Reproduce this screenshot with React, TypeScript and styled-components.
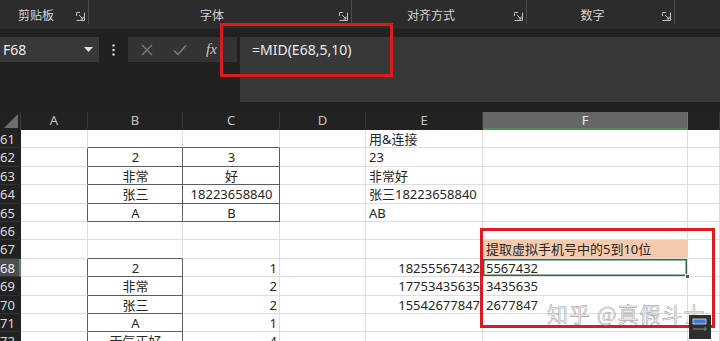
import React from "react";
import styled, { createGlobalStyle } from "styled-components";

const Global = createGlobalStyle`
  html, body { margin: 0; padding: 0; background: #212121; }
  * { box-sizing: border-box; }
`;

const Screen = styled.div`
  position: relative;
  width: 720px;
  height: 341px;
  overflow: hidden;
  background: #212121;
  font-family: "Noto Sans", "Noto Sans CJK SC", sans-serif;
`;

const Ribbon = styled.div`
  display: flex;
  height: 29px;
  background: #2c2c2c;
  border-bottom: 1px solid #262626;
`;

const Group = styled.div<{ $w: number; $pad?: number }>`
  display: flex;
  align-items: flex-end;
  width: ${(p) => p.$w}px;
  height: 24px;
  padding-left: ${(p) => p.$pad ?? 0}px;
  border-right: 1px solid #4a4a4a;
`;

const GroupLabel = styled.div`
  flex: 1;
  text-align: center;
  font-family: "Noto Sans CJK SC", sans-serif;
  font-size: 12px;
  line-height: 14px;
  padding-bottom: 2px;
  color: #d4d4d4;
`;

const Launcher = styled.div`
  width: 16px;
  height: 14px;
  display: flex;
  align-items: center;
  justify-content: center;
  padding-bottom: 2px;
`;

const FormulaRow = styled.div`
  display: flex;
  align-items: flex-start;
  margin-top: 8px;
  height: 65px;
`;

const NameBox = styled.div`
  width: 99px;
  height: 25px;
  background: #383838;
  display: flex;
  align-items: center;
  justify-content: space-between;
  padding: 0 6px 0 3px;
  color: #ececec;
  font-size: 14px;
`;

const Dots = styled.div`
  width: 29px;
  height: 25px;
  display: flex;
  align-items: center;
  justify-content: center;
`;

const FxBox = styled.div`
  width: 109px;
  height: 25px;
  background: #333333;
  display: flex;
  align-items: center;
  padding-left: 10px;
  gap: 15px;
`;

const FxLabel = styled.span`
  font-family: "Liberation Serif", serif;
  font-style: italic;
  font-size: 15px;
  color: #c8c8c8;
  margin-left: 2px;
`;

const FormulaInput = styled.div`
  flex: 1;
  margin-left: 3px;
  height: 65px;
  background: #383838;
  color: #ececec;
  font-size: 14px;
  line-height: 25px;
  padding-left: 12px;
`;

const Sheet = styled.div`
  margin-top: 10px;
  display: grid;
  grid-template-columns: 21px 67px 95px 97px 86px 117px 205px 1fr;
  grid-template-rows: 18px repeat(12, 18.4px);
  background: #ffffff;
`;

const Corner = styled.div`
  background: #222222;
  border-right: 1px solid #3a3a3a;
  display: flex;
  align-items: flex-end;
  justify-content: flex-end;
  padding: 0 2px 2px 0;
`;

const ColHead = styled.div<{ $active?: boolean }>`
  background: ${(p) => (p.$active ? "#666666" : "#222222")};
  border-right: 1px solid ${(p) => (p.$active ? "#7a7a7a" : "#3a3a3a")};
  border-bottom: 2px solid ${(p) => (p.$active ? "#4f8a62" : "#222222")};
  color: ${(p) => (p.$active ? "#e6e6e6" : "#c2c2c2")};
  font-size: 13px;
  line-height: 17px;
  text-align: center;
`;

const RowHead = styled.div<{ $active?: boolean }>`
  background: ${(p) => (p.$active ? "#4d4d4d" : "#222222")};
  border-right: 2px solid ${(p) => (p.$active ? "#4f8a62" : "#222222")};
  border-bottom: 1px solid #333333;
  color: ${(p) => (p.$active ? "#f0f0f0" : "#dadada")};
  font-size: 13px;
  line-height: 18px;
  text-align: right;
  padding-right: 5px;
  overflow: hidden;
`;

const Cell = styled.div<{
  $align: string;
  $bg?: string;
  $rd: boolean;
  $bd: boolean;
  $sel?: boolean;
}>`
  position: relative;
  background: ${(p) => p.$bg ?? "#ffffff"};
  border-right: 1px solid ${(p) => (p.$rd ? "#5e5e5e" : p.$bg ? p.$bg : "#dedede")};
  border-bottom: 1px solid ${(p) => (p.$bd ? "#5e5e5e" : "#dedede")};
  box-shadow: ${(p) => (p.$sel ? "inset 0 0 0 1.5px #2e6b45" : "none")};
  color: #262626;
  font-size: 13px;
  line-height: 18px;
  text-align: ${(p) => p.$align};
  padding: 0 2px 0 3px;
  white-space: nowrap;
  overflow: visible;
  z-index: ${(p) => (p.$sel ? 2 : 1)};
`;

const FillHandle = styled.span`
  position: absolute;
  right: -3px;
  bottom: -3px;
  width: 5px;
  height: 5px;
  background: #2e6b45;
  border: 1px solid #ffffff;
`;

const RedBox = styled.div<{ $x: number; $y: number; $w: number; $h: number }>`
  position: absolute;
  left: ${(p) => p.$x}px;
  top: ${(p) => p.$y}px;
  width: ${(p) => p.$w}px;
  height: ${(p) => p.$h}px;
  border: 3px solid #dc1a1f;
  z-index: 10;
  pointer-events: none;
`;

const Watermark = styled.div`
  position: absolute;
  left: 547px;
  top: 298px;
  font-family: "Noto Sans CJK SC", sans-serif;
  font-size: 21px;
  letter-spacing: 1px;
  color: rgba(235, 235, 235, 0.75);
  -webkit-text-stroke: 0.6px rgba(140, 140, 140, 0.7);
  z-index: 11;
  white-space: nowrap;
`;

const CornerBadge = styled.div`
  position: absolute;
  left: 689px;
  top: 315px;
  width: 22px;
  height: 24px;
  background: #2e2e2e;
  z-index: 12;
`;

type CellData = { t: string; a?: string; bg?: string; sel?: boolean };

const data: Record<string, CellData> = {
  E61: { t: "用&连接" },
  B62: { t: "2", a: "center" },
  C62: { t: "3", a: "center" },
  E62: { t: "23" },
  B63: { t: "非常", a: "center" },
  C63: { t: "好", a: "center" },
  E63: { t: "非常好" },
  B64: { t: "张三", a: "center" },
  C64: { t: "18223658840", a: "center" },
  E64: { t: "张三18223658840" },
  B65: { t: "A", a: "center" },
  C65: { t: "B", a: "center" },
  E65: { t: "AB" },
  F67: { t: "提取虚拟手机号中的5到10位", bg: "#f7caac" },
  B68: { t: "2", a: "center" },
  C68: { t: "1", a: "right" },
  E68: { t: "18255567432", a: "right" },
  F68: { t: "5567432", sel: true },
  B69: { t: "非常", a: "center" },
  C69: { t: "2", a: "right" },
  E69: { t: "17753435635", a: "right" },
  F69: { t: "3435635" },
  B70: { t: "张三", a: "center" },
  C70: { t: "2", a: "right" },
  E70: { t: "15542677847", a: "right" },
  F70: { t: "2677847" },
  B71: { t: "A", a: "center" },
  C71: { t: "1", a: "right" },
  B72: { t: "天气正好", a: "center" },
  C72: { t: "4", a: "right" },
};

const cols = ["A", "B", "C", "D", "E", "F", "G"];
const rows = [61, 62, 63, 64, 65, 66, 67, 68, 69, 70, 71, 72];

const boxed = (r: number, c: number) => {
  const col = cols[c];
  if (r >= 62 && r <= 65 && (col === "B" || col === "C")) return true;
  if (r >= 68 && r <= 72 && col === "B") return true;
  return false;
};

const LauncherIcon = () => (
  <svg width="9" height="9" viewBox="0 0 9 9">
    <path d="M0.5 4 V0.5 H4" fill="none" stroke="#bdbdbd" strokeWidth="1" />
    <path d="M0.5 8.5 H8.5 V0.5" fill="none" stroke="#bdbdbd" strokeWidth="1" />
    <path d="M3 3 L7 7 M7 4.5 V7 H4.5" fill="none" stroke="#bdbdbd" strokeWidth="1" />
  </svg>
);

export default function App() {
  return (
    <Screen>
      <Global />
      <Ribbon>
        <Group $w={89}>
          <GroupLabel>剪贴板</GroupLabel>
          <Launcher>
            <LauncherIcon />
          </Launcher>
        </Group>
        <Group $w={263}>
          <GroupLabel>字体</GroupLabel>
          <Launcher>
            <LauncherIcon />
          </Launcher>
        </Group>
        <Group $w={175}>
          <GroupLabel>对齐方式</GroupLabel>
          <Launcher>
            <LauncherIcon />
          </Launcher>
        </Group>
        <Group $w={148}>
          <GroupLabel>数字</GroupLabel>
          <Launcher>
            <LauncherIcon />
          </Launcher>
        </Group>
      </Ribbon>

      <FormulaRow>
        <NameBox>
          <span>F68</span>
          <svg width="9" height="5" viewBox="0 0 9 5">
            <path d="M0 0 H9 L4.5 5 Z" fill="#e0e0e0" />
          </svg>
        </NameBox>
        <Dots>
          <svg width="3" height="12" viewBox="0 0 3 12">
            <circle cx="1.5" cy="1.5" r="1.3" fill="#d0d0d0" />
            <circle cx="1.5" cy="6" r="1.3" fill="#d0d0d0" />
            <circle cx="1.5" cy="10.5" r="1.3" fill="#d0d0d0" />
          </svg>
        </Dots>
        <FxBox>
          <svg width="18" height="18" viewBox="0 0 18 18">
            <path d="M4 4 L14 14 M14 4 L4 14" stroke="#7a7a7a" strokeWidth="1.4" />
          </svg>
          <svg width="18" height="18" viewBox="0 0 18 18">
            <path d="M3 9.5 L7 13.5 L15 4.5" fill="none" stroke="#7a7a7a" strokeWidth="1.5" />
          </svg>
          <FxLabel>fx</FxLabel>
        </FxBox>
        <FormulaInput>=MID(E68,5,10)</FormulaInput>
      </FormulaRow>

      <Sheet>
        <Corner>
          <svg width="14" height="14" viewBox="0 0 14 14">
            <path d="M14 0 V14 H0 Z" fill="#6c6c6c" />
          </svg>
        </Corner>
        {cols.map((c) => (
          <ColHead key={c} $active={c === "F"}>
            {c === "G" ? "" : c}
          </ColHead>
        ))}
        {rows.map((r) => (
          <React.Fragment key={r}>
            <RowHead $active={r === 68}>{r}</RowHead>
            {cols.map((c, ci) => {
              const d = data[`${c}${r}`];
              const rd = boxed(r, ci) || boxed(r, ci + 1);
              const bd = boxed(r, ci) || boxed(r + 1, ci);
              return (
                <Cell
                  key={c}
                  $align={d?.a ?? "left"}
                  $bg={d?.bg}
                  $rd={rd}
                  $bd={bd}
                  $sel={d?.sel}
                >
                  {d?.t}
                  {d?.sel && <FillHandle />}
                </Cell>
              );
            })}
          </React.Fragment>
        ))}
      </Sheet>

      <RedBox $x={220} $y={23} $w={173} $h={54} />
      <RedBox $x={480} $y={228} $w={235} $h={100} />
      <Watermark>知乎 @真假斗士</Watermark>
      <CornerBadge>
        <svg width="22" height="24" viewBox="0 0 22 24">
          <rect x="4" y="4" width="13" height="5" fill="#3b78d8" />
          <rect x="4" y="4" width="13" height="5" fill="none" stroke="#e0e0e0" strokeWidth="0.8" />
          <path d="M4 14 H18 M16 12 V16" stroke="#8a8a8a" strokeWidth="1" />
        </svg>
      </CornerBadge>
    </Screen>
  );
}
